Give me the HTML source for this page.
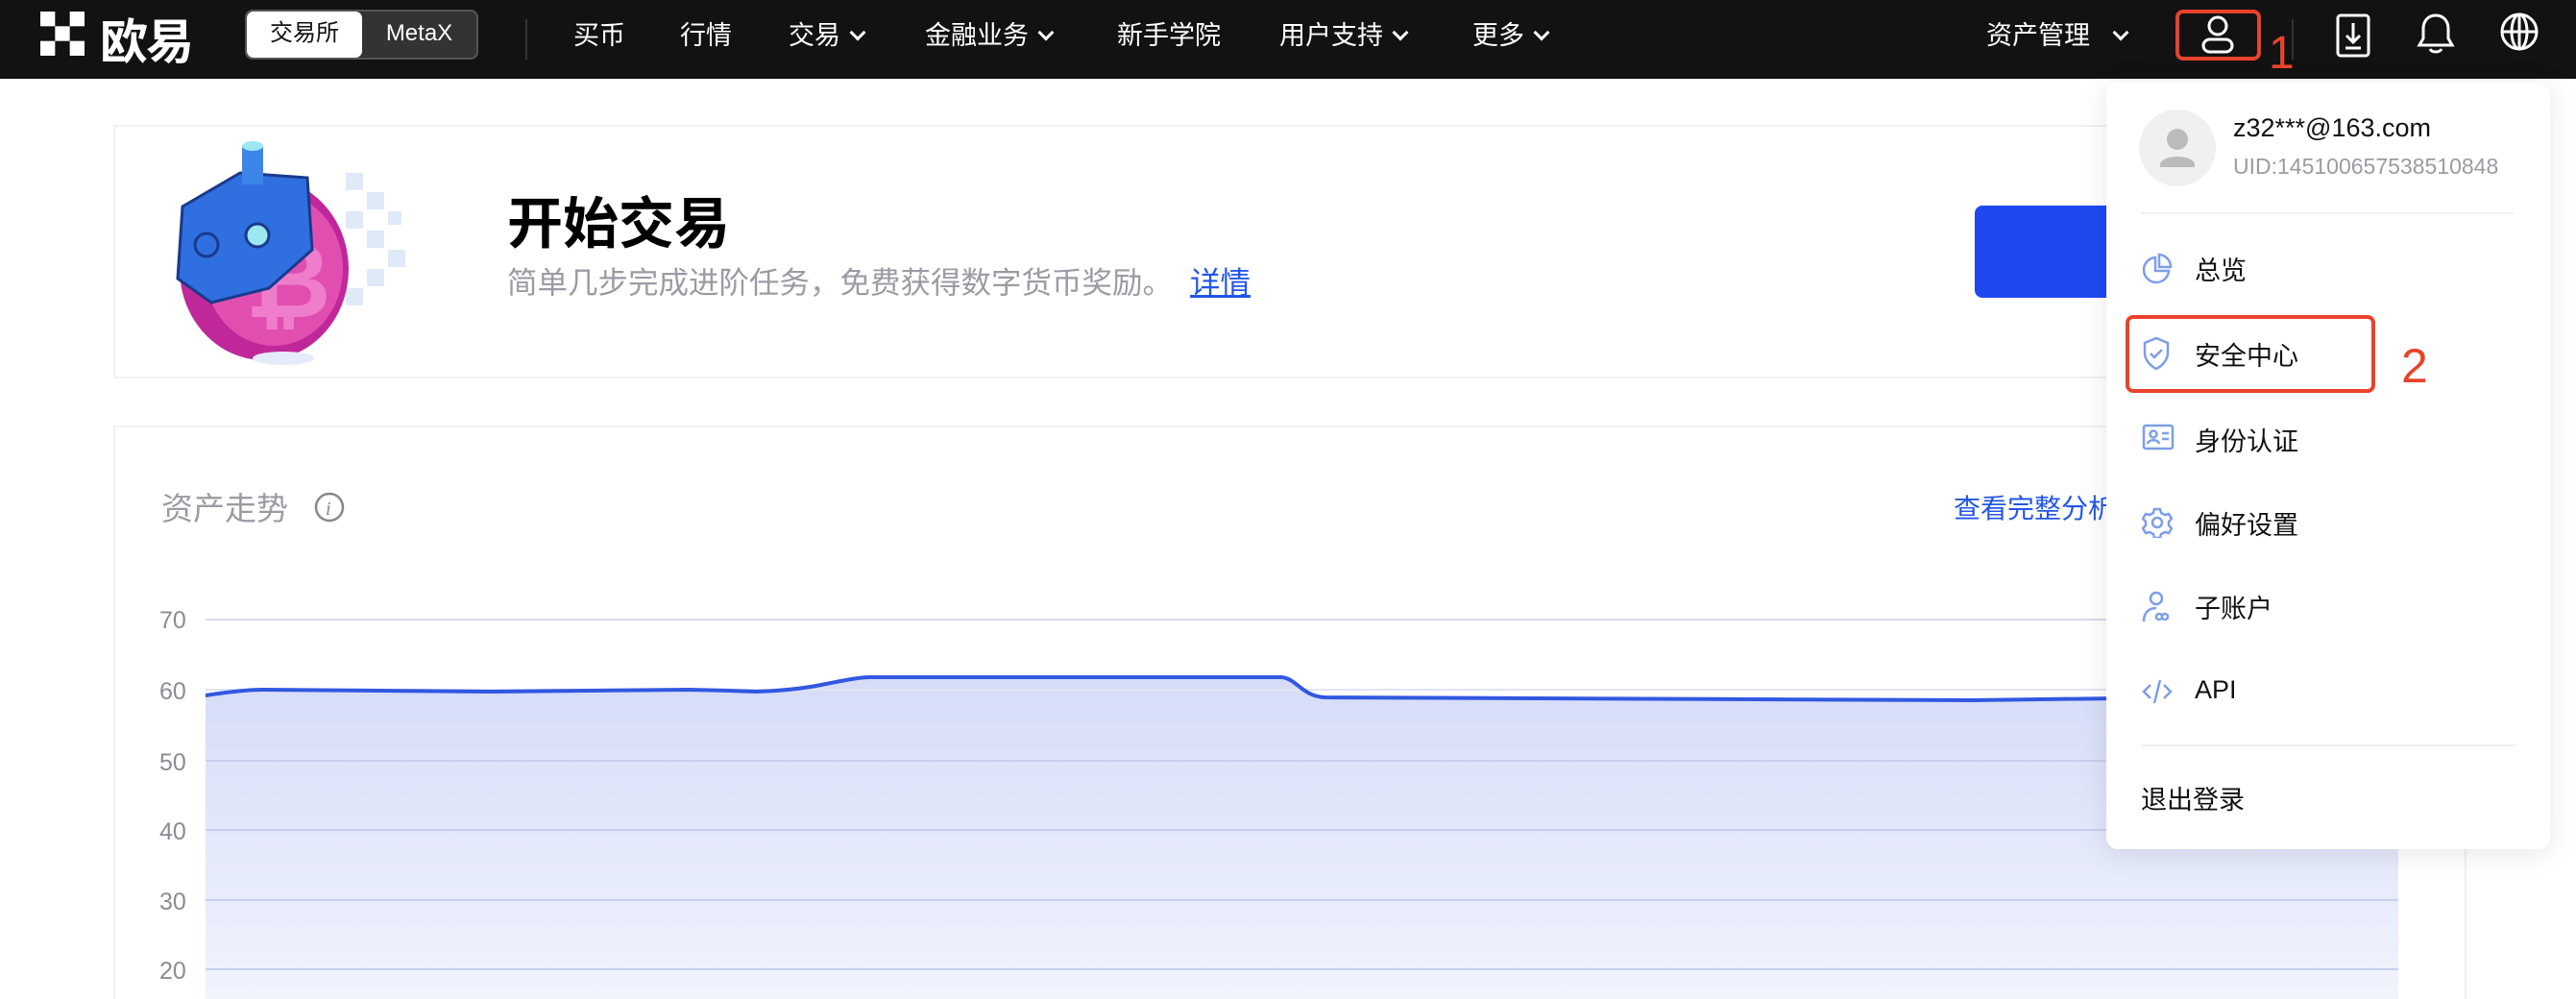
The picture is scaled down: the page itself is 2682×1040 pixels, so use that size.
<!DOCTYPE html>
<html><head><meta charset="utf-8">
<style>
*{margin:0;padding:0;box-sizing:border-box}
html,body{width:2682px;height:1040px;overflow:hidden;background:#fff}
body{font-family:"Liberation Sans","Noto Sans CJK SC",sans-serif}
#w{position:relative;width:2682px;height:1040px;overflow:hidden}
.a{position:absolute;white-space:nowrap}
.hdr{position:absolute;left:0;top:0;width:2682px;height:82px;background:#121212}
.nav{color:#fff;font-size:27px;top:15px}
.chev{display:inline-block;width:12px;height:12px;border-right:3px solid #fff;border-bottom:3px solid #fff;transform:rotate(45deg);margin-left:12px;position:relative;top:-6px}
.card{position:absolute;border:2px solid #f0f1f4;background:#fff}
.mi{font-size:27px;color:#111;left:2285px}
.ic{position:absolute;left:2230px}
</style></head><body><div id="w">
<div class="hdr"></div>
<svg class="a" style="left:40px;top:12px" width="50" height="46" viewBox="0 0 48 48" fill="#fff">
<rect x="0" y="0" width="16" height="16"/><rect x="32" y="0" width="16" height="16"/><rect x="16" y="16" width="16" height="16"/><rect x="0" y="32" width="16" height="16"/><rect x="32" y="32" width="16" height="16"/></svg>
<div class="a" style="left:104px;top:4px;color:#fff;font-size:50px;font-weight:bold;letter-spacing:-2px">欧易</div>
<div class="a" style="left:255px;top:10px;width:243px;height:52px;border:2px solid #555;border-radius:8px;background:#333"></div>
<div class="a" style="left:257px;top:12px;width:120px;height:48px;background:#fff;border-radius:7px;color:#111;font-size:24px;text-align:center;line-height:46px">交易所</div>
<div class="a" style="left:377px;top:12px;width:119px;height:48px;color:#fff;font-size:24px;text-align:center;line-height:46px">MetaX</div>
<div class="a" style="left:547px;top:20px;width:2px;height:42px;background:#333"></div>
<div class="a nav" style="left:597px">买币</div>
<div class="a nav" style="left:708px">行情</div>
<div class="a nav" style="left:821px">交易<span class="chev"></span></div>
<div class="a nav" style="left:963px">金融业务<span class="chev"></span></div>
<div class="a nav" style="left:1163px">新手学院</div>
<div class="a nav" style="left:1332px">用户支持<span class="chev"></span></div>
<div class="a nav" style="left:1533px">更多<span class="chev"></span></div>
<div class="a nav" style="left:2068px">资产管理<span class="chev" style="margin-left:26px"></span></div>
<div class="a" style="left:2265px;top:10px;width:89px;height:53px;border:4px solid #e8432b;border-radius:8px"></div>
<svg class="a" style="left:2288px;top:14px" width="42" height="44" viewBox="0 0 42 44" fill="none" stroke="#fff" stroke-width="3"><circle cx="21" cy="13" r="9"/><rect x="6" y="27" width="30" height="13" rx="6.5"/></svg>
<div class="a" style="left:2362px;top:30px;color:#e8432b;font-size:48px;line-height:52px">1</div>
<div class="a" style="left:2386px;top:20px;width:2px;height:42px;background:#333"></div>
<svg class="a" style="left:2432px;top:14px" width="36" height="46" viewBox="0 0 36 46" fill="none" stroke="#fff" stroke-width="3"><rect x="2" y="2" width="32" height="42" rx="3"/><path d="M18 10v20M11 23l7 7 7-7M10 36h16"/></svg>
<svg class="a" style="left:2516px;top:12px" width="40" height="48" viewBox="0 0 40 48" fill="none" stroke="#fff" stroke-width="3"><path d="M20 4c-8 0-13 6-13 14v10l-4 7h34l-4-7V18C33 10 28 4 20 4z"/><path d="M14 39c2 4 10 4 12 0"/></svg>
<svg class="a" style="left:2602px;top:12px" width="42" height="42" viewBox="0 0 42 42" fill="none" stroke="#fff" stroke-width="3"><circle cx="21" cy="21" r="18"/><ellipse cx="21" cy="21" rx="8" ry="18"/><path d="M3 21h36M21 3v36"/></svg>

<div class="card" style="left:118px;top:130px;width:2450px;height:264px"></div>
<svg class="a" style="left:160px;top:140px" width="280" height="245" viewBox="0 0 280 245">
<g fill="#dfe9f8"><rect x="200" y="40" width="18" height="18"/><rect x="222" y="60" width="18" height="18"/><rect x="200" y="80" width="18" height="18"/><rect x="222" y="100" width="18" height="18"/><rect x="244" y="120" width="18" height="18"/><rect x="222" y="140" width="18" height="18"/><rect x="200" y="160" width="18" height="18"/><rect x="244" y="80" width="14" height="14"/></g>
<ellipse cx="115" cy="140" rx="88" ry="95" fill="#c0289a"/>
<ellipse cx="125" cy="140" rx="72" ry="80" fill="#e04fb0"/>
<text x="95" y="190" font-size="110" font-weight="bold" fill="#f07ccc" font-family="Liberation Sans">₿</text>
<path d="M30 75 L90 40 L160 45 L165 120 L120 160 L60 175 L25 150 Z" fill="#2f6fe0" stroke="#1a3a8a" stroke-width="3"/>
<rect x="92" y="12" width="22" height="40" fill="#3b86e8"/><ellipse cx="103" cy="12" rx="11" ry="5" fill="#9ce8f0"/>
<circle cx="108" cy="105" r="12" fill="#9ce8f0" stroke="#1a3a8a" stroke-width="3"/>
<circle cx="55" cy="115" r="12" fill="none" stroke="#1a3a8a" stroke-width="3"/>
<ellipse cx="135" cy="233" rx="32" ry="7" fill="#e6ebfa"/>
</svg>
<div class="a" style="left:528px;top:186px;font-size:58px;font-weight:bold;color:#000">开始交易</div>
<div class="a" style="left:528px;top:269px;font-size:31.5px;color:#9a9ca4">简单几步完成进阶任务，免费获得数字货币奖励。<span style="color:#2356e8;text-decoration:underline;margin-left:18px">详情</span></div>
<div class="a" style="left:2056px;top:214px;width:200px;height:96px;background:#1f48f0;border-radius:8px"></div>

<div class="card" style="left:118px;top:443px;width:2450px;height:597px;border-bottom:none"></div>
<div class="a" style="left:168px;top:503px;font-size:33px;color:#9a9ca4">资产走势</div>
<svg class="a" style="left:326px;top:511px" width="34" height="34" viewBox="0 0 34 34"><circle cx="17" cy="17" r="14" fill="none" stroke="#888" stroke-width="2.5"/><text x="13" y="25" font-size="20" font-style="italic" fill="#888" font-family="Liberation Serif">i</text></svg>
<div class="a" style="left:2034px;top:508px;font-size:28px;color:#2356e8">查看完整分析</div>
<svg class="a" style="left:0;top:0" width="2682" height="1040">
<defs><linearGradient id="g" x1="0" y1="0" x2="0" y2="1"><stop offset="0" stop-color="#d5dcf7"/><stop offset="1" stop-color="#f1f4fd"/></linearGradient></defs>
<g font-family="Liberation Sans" font-size="25" fill="#8a8c94">
<text x="166" y="654">70</text><text x="166" y="728">60</text><text x="166" y="802">50</text><text x="166" y="874">40</text><text x="166" y="947">30</text><text x="166" y="1019">20</text></g>
<path d="M214 724 C240 720 260 718 274 718 L513 720 L718 718 L760 719 L787 720 C820 719 840 716 855 713 C880 708 895 705 906 705 L1334 705 C1350 706 1355 725 1380 726 L2053 729 C2300 727 2400 723 2497 723 L2497 1040 L214 1040 Z" fill="url(#g)"/>
<g stroke="#d8dcec" stroke-width="2"><path d="M214 645H2497"/><path d="M214 718H2497" stroke="#e0e4f4"/><path d="M214 792H2497" stroke="#c7cfee"/><path d="M214 864H2497" stroke="#c7cfee"/><path d="M214 937H2497" stroke="#c7cfee"/><path d="M214 1009H2497" stroke="#c7cfee"/></g>
<path d="M214 724 C240 720 260 718 274 718 L513 720 L718 718 L760 719 L787 720 C820 719 840 716 855 713 C880 708 895 705 906 705 L1334 705 C1350 706 1355 725 1380 726 L2053 729 C2300 727 2400 723 2497 723" fill="none" stroke="#3158e0" stroke-width="4"/>
</svg>

<div class="a" style="left:2193px;top:86px;width:462px;height:798px;background:#fff;border-radius:12px;box-shadow:0 4px 30px rgba(0,0,0,.1)"></div>
<svg class="a" style="left:2227px;top:114px" width="80" height="80" viewBox="0 0 80 80"><circle cx="40" cy="40" r="40" fill="#f0f0f0"/><circle cx="40" cy="31" r="11" fill="#bbb"/><path d="M22 58c0-12 36-12 36 0v2H22z" fill="#bbb"/></svg>
<div class="a" style="left:2325px;top:118px;font-size:27px;color:#111">z32***@163.com</div>
<div class="a" style="left:2325px;top:160px;font-size:23px;color:#9a9ca4">UID:145100657538510848</div>
<div class="a" style="left:2229px;top:221px;width:388px;height:2px;background:#eef0f5"></div>
<svg class="ic" style="top:263px" width="32" height="34" viewBox="0 0 32 34" fill="none" stroke="#7d9ee8" stroke-width="2.5"><path d="M14 5A13 13 0 1 0 28 19H14z"/><path d="M18 2v13h12A13 13 0 0 0 18 2z"/></svg>
<div class="a mi" style="top:260px">总览</div>
<div class="a" style="left:2213px;top:328px;width:260px;height:81px;border:4px solid #e8432b;border-radius:8px"></div>
<svg class="ic" style="top:350px" width="30" height="36" viewBox="0 0 30 36" fill="none" stroke="#7d9ee8" stroke-width="2.5"><path d="M15 2L3 7v10c0 8 6 14 12 17 6-3 12-9 12-17V7z"/><path d="M9 18l4 4 8-8"/></svg>
<div class="a mi" style="top:349px">安全中心</div>
<div class="a" style="left:2500px;top:352px;font-size:50px;color:#e8432b">2</div>
<svg class="ic" style="top:441px" width="34" height="28" viewBox="0 0 34 28" fill="none" stroke="#7d9ee8" stroke-width="2.5"><rect x="2" y="2" width="30" height="24" rx="2"/><circle cx="12" cy="11" r="3.5"/><path d="M6 21c1-5 11-5 12 0M21 10h7M21 16h7"/></svg>
<div class="a mi" style="top:438px">身份认证</div>
<svg class="ic" style="top:528px" width="32" height="32" viewBox="0 0 32 32" fill="none" stroke="#7d9ee8" stroke-width="2.5"><path d="M13 2h6l1 4 4 2 4-1 3 5-3 3v4l3 3-3 5-4-1-4 2-1 4h-6l-1-4-4-2-4 1-3-5 3-3v-4L1 12l3-5 4 1 4-2z"/><circle cx="16" cy="16" r="5"/></svg>
<div class="a mi" style="top:525px">偏好设置</div>
<svg class="ic" style="top:614px" width="32" height="34" viewBox="0 0 32 34" fill="none" stroke="#7d9ee8" stroke-width="2.5"><circle cx="15" cy="9" r="6"/><path d="M2 33c0-9 5-14 13-14"/><path d="M15 28c0-4 6-4 6 0s6 4 6 0-6-4-6 0-6 4-6 0z"/></svg>
<div class="a mi" style="top:612px">子账户</div>
<svg class="ic" style="top:705px" width="32" height="30" viewBox="0 0 32 30" fill="none" stroke="#7d9ee8" stroke-width="2.5"><path d="M9 8l-7 7 7 7M23 8l7 7-7 7M19 3l-6 24"/></svg>
<div class="a mi" style="top:703px">API</div>
<div class="a" style="left:2229px;top:775px;width:390px;height:2px;background:#eef0f5"></div>
<div class="a mi" style="left:2229px;top:811px">退出登录</div>
</div></body></html>
